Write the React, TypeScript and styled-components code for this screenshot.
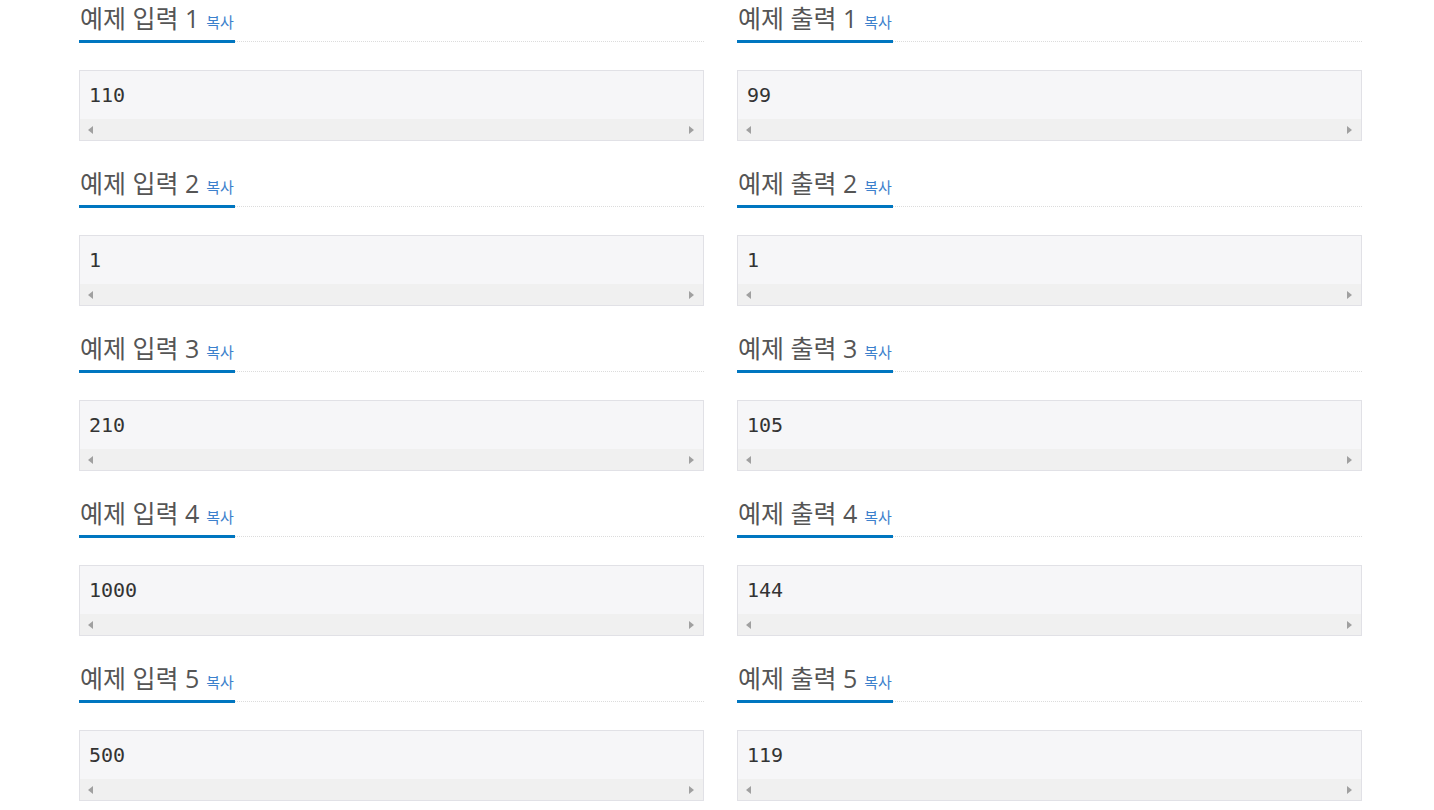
import React from 'react';
import styled, { createGlobalStyle } from 'styled-components';

const GlobalStyle = createGlobalStyle`
  body {
    margin: 0;
    background: #fff;
    font-family: 'Open Sans', 'Noto Sans CJK KR', sans-serif;
  }
`;

const StyledPage = styled.div`
  padding: 3px 0 0 79px;
  width: 1283px;
`;

const StyledGrid = styled.div`
  display: grid;
  grid-template-columns: 625px 625px;
  column-gap: 33px;
`;

const StyledSection = styled.section`
  margin-bottom: 27px;
`;

const StyledHeadline = styled.div`
  display: flex;
  align-items: flex-end;
`;

const StyledTitle = styled.h2`
  display: flex;
  align-items: baseline;
  height: 30px;
  margin: 0;
  padding: 0 1px 7px 1px;
  font-size: 25px;
  font-weight: 400;
  line-height: 30px;
  color: #555;
  border-bottom: 3px solid #0076c0;
  white-space: nowrap;
`;

const StyledCopy = styled.a`
  margin-left: 7px;
  font-size: 15px;
  color: #3c80cc;
  text-decoration: none;
  cursor: pointer;
`;

const StyledRule = styled.div`
  flex: 1;
  margin-bottom: 1px;
  border-bottom: 1px dotted #dcdcdc;
`;

const StyledPre = styled.div`
  margin-top: 27px;
  border: 1px solid #e1e1e6;
  background: #f6f6f8;
`;

const StyledCode = styled.div`
  height: 48px;
  padding: 0 9px;
  font-family: 'DejaVu Sans Mono', 'Liberation Mono', monospace;
  font-size: 20px;
  line-height: 48px;
  color: #333;
`;

const StyledScroll = styled.div`
  display: flex;
  justify-content: space-between;
  align-items: center;
  height: 21px;
  padding: 0 9px 0 8px;
  background: #f0f0f0;
`;

const StyledArrow = styled.span<{ dir: 'left' | 'right' }>`
  width: 0;
  height: 0;
  border-top: 4.5px solid transparent;
  border-bottom: 4.5px solid transparent;
  ${({ dir }) =>
    dir === 'left'
      ? 'border-right: 5px solid #a0a0a0;'
      : 'border-left: 5px solid #a0a0a0;'}
`;

interface SampleProps {
  title: string;
  value: string;
}

const Sample: React.FC<SampleProps> = ({ title, value }) => (
  <StyledSection>
    <StyledHeadline>
      <StyledTitle>
        <span>{title}</span>
        <StyledCopy>복사</StyledCopy>
      </StyledTitle>
      <StyledRule />
    </StyledHeadline>
    <StyledPre>
      <StyledCode>{value}</StyledCode>
      <StyledScroll>
        <StyledArrow dir='left' />
        <StyledArrow dir='right' />
      </StyledScroll>
    </StyledPre>
  </StyledSection>
);

const samples = [
  { input: '110', output: '99' },
  { input: '1', output: '1' },
  { input: '210', output: '105' },
  { input: '1000', output: '144' },
  { input: '500', output: '119' },
];

const App: React.FC = () => {
  return (
    <StyledPage>
      <GlobalStyle />
      <StyledGrid>
        {samples.map((s, i) => (
          <React.Fragment key={i}>
            <Sample title={`예제 입력 ${i + 1}`} value={s.input} />
            <Sample title={`예제 출력 ${i + 1}`} value={s.output} />
          </React.Fragment>
        ))}
      </StyledGrid>
    </StyledPage>
  );
};

export default App;
